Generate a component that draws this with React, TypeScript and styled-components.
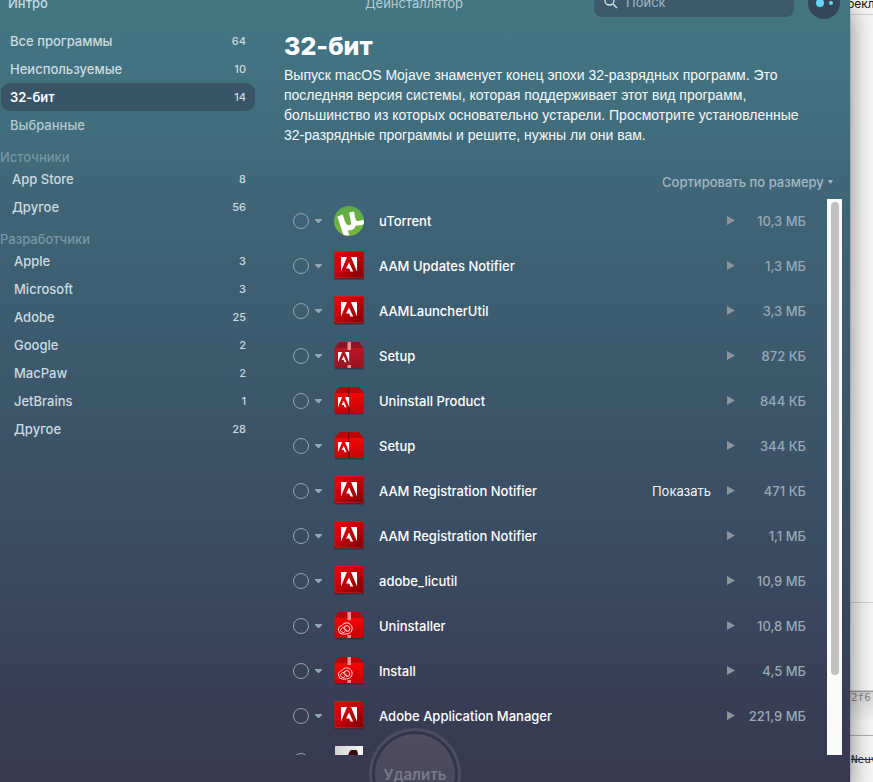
import React from "react";
import styled, { createGlobalStyle } from "styled-components";

const GlobalStyle = createGlobalStyle`
  *, *::before, *::after { box-sizing: border-box; }
  body {
    margin: 0;
    overflow: hidden;
    background: #f6f6f6;
    font-family: Inter, "Liberation Sans", sans-serif;
    font-size: 13px;
    color: #fff;
  }
  button, input, select { font: inherit; color: inherit; }
  ul { list-style: none; margin: 0; padding: 0; }
`;

const Desktop = styled.div`
  display: flex;
  height: 100vh;
  overflow: hidden;
`;

const Window = styled.div`
  position: relative;
  z-index: 1;
  flex: 1;
  min-width: 0;
  display: flex;
  flex-direction: column;
  overflow: hidden;
  background: linear-gradient(#437682 0%, #426f7e 14%, #3f6376 28%, #3c576b 50%, #39485f 76%, #383d55 90%, #37384f 100%);
`;

const WindowShadow = styled.div`
  z-index: 1;
  flex: 1;
  min-width: 0;
  display: flex;
  box-shadow: 0 0 1px rgba(0, 0, 0, 0.5), 0 10px 24px rgba(0, 0, 0, 0.5);
`;

const Header = styled.header`
  display: grid;
  grid-template-columns: 1fr auto 1fr;
  align-items: end;
  align-content: end;
  height: 19px;
  flex: none;
  padding: 0 10px 0 8px;
`;

const BackButton = styled.button`
  justify-self: start;
  height: 32px;
  padding: 0;
  border: 0;
  background: none;
  font-weight: 500;
  color: #c5d9df;
`;

const WindowTitle = styled.span`
  height: 32px;
  line-height: 32px;
  padding-right: 20px;
  color: #b3ccd3;
`;

const HeaderTools = styled.div`
  justify-self: end;
  display: flex;
  align-items: end;
  gap: 14px;
`;

const SearchBox = styled.label`
  display: flex;
  align-items: center;
  gap: 8px;
  width: 200px;
  height: 30px;
  margin-bottom: 2px;
  padding: 0 10px;
  border-radius: 8px;
  background: #3c5a6b;
  color: #dbe6ea;
`;

const SearchInput = styled.input`
  flex: 1;
  min-width: 0;
  padding: 0;
  border: 0;
  outline: 0;
  background: none;
  &::placeholder { color: #a5b7c1; opacity: 1; }
`;

const Assistant = styled.button`
  display: flex;
  align-items: center;
  justify-content: center;
  gap: 5px;
  width: 32px;
  height: 32px;
  padding: 0;
  border: 0;
  border-radius: 50%;
  background: #344659;
`;

const Dot = styled.span<{ $size: number }>`
  width: ${(p) => p.$size}px;
  height: ${(p) => p.$size}px;
  border-radius: 50%;
  background: #62d4f7;
`;

const Body = styled.div`
  flex: 1;
  min-height: 0;
  display: grid;
  grid-template-columns: 255px minmax(0, 1fr);
`;

const Sidebar = styled.nav`
  padding: 8px 0 0 1px;
`;

const GroupTitle = styled.h2`
  height: 26px;
  margin: 0 0 0 -1px;
  padding-top: 8px;
  font-size: 13px;
  line-height: 20px;
  font-weight: 500;
  color: #7897a5;
`;

const SideItem = styled.button<{ $indent: number; $active?: boolean; $dim?: boolean }>`
  display: flex;
  align-items: center;
  justify-content: space-between;
  width: 100%;
  height: 28px;
  padding: 0 9px 0 ${(p) => p.$indent}px;
  border: 0;
  border-radius: 9px;
  background: ${(p) => (p.$active ? "#395367" : "none")};
  color: ${(p) => (p.$active ? "#fff" : p.$dim ? "#b5c8d0" : "#cbdbe1")};
  font-weight: ${(p) => (p.$active ? 600 : 500)};
  text-align: left;
`;

const Count = styled.span`
  font-size: 11px;
  font-weight: 500;
  color: #cbdae1;
`;

const Main = styled.main`
  display: flex;
  flex-direction: column;
  min-height: 0;
  padding: 12px 8px 27px 29px;
`;

const Title = styled.h1`
  margin: 0 0 4px;
  font-size: 25px;
  line-height: 30px;
  font-weight: 800;
`;

const Description = styled.p`
  margin: 0;
  font-family: "Liberation Sans", Arial, sans-serif;
  font-size: 14px;
  line-height: 20px;
  white-space: nowrap;
  color: #f4f9fa;
`;

const SortField = styled.label`
  align-self: flex-end;
  display: flex;
  align-items: center;
  gap: 4px;
  height: 20px;
  margin: 27px 9px 7px 0;
  color: #a3b8c2;
`;

const SortSelect = styled.select`
  padding: 0;
  border: 0;
  outline: 0;
  appearance: none;
  background: none;
  font-weight: 500;
`;

const ListPane = styled.div`
  flex: 1;
  min-height: 0;
  display: flex;
`;

const AppList = styled.ul`
  flex: 1;
  min-width: 0;
  overflow: hidden;
`;

const AppRow = styled.li`
  display: flex;
  align-items: center;
  height: 45px;
  padding: 0 21px 2px 9px;
`;

const Tick = styled.input`
  appearance: none;
  width: 16px;
  height: 16px;
  margin: 0 6px 0 0;
  border: 1px solid #91a6b2;
  border-radius: 50%;
  &:checked { background: #62d4f7; }
`;

const IconButton = styled.button<{ $tone: string }>`
  display: flex;
  flex: none;
  padding: 0;
  border: 0;
  background: none;
  color: ${(p) => p.$tone};
`;

const AppIcon = styled.span`
  display: flex;
  flex: none;
  width: 30px;
  height: 32px;
  margin: 0 15px 0 12px;
`;

const AppName = styled.label`
  flex: 1;
  font-weight: 500;
  color: #fff;
`;

const ShowButton = styled.button`
  padding: 0;
  margin-right: 16px;
  border: 0;
  background: none;
  color: #eef3f5;
`;

const Size = styled.span`
  width: 71px;
  text-align: right;
  font-weight: 500;
  color: #98a9b6;
`;

const Track = styled.div`
  flex: none;
  width: 15px;
  padding: 3px;
  background: #fafafa;
`;

const Thumb = styled.div`
  width: 8px;
  height: 86%;
  margin: 0 auto;
  border-radius: 4px;
  background: #c1c1c1;
`;

const RemoveButton = styled.button`
  position: absolute;
  left: calc(50% - 56px);
  bottom: -38px;
  width: 92px;
  height: 92px;
  padding: 0;
  border: 3px solid #4a4c63;
  border-radius: 50%;
  background: linear-gradient(#504c62, #464559);
  box-shadow: inset 0 0 0 3px #323349;
  font-size: 15px;
  font-weight: 600;
  color: #77788c;
`;

const Backdrop = styled.aside`
  flex: none;
  width: 23px;
  display: flex;
  flex-direction: column;
  background: #f8f8f8;
  color: #111;
`;

const Strip = styled.div<{ $height: number }>`
  flex: none;
  display: flex;
  align-items: flex-end;
  height: ${(p) => p.$height}px;
  border-bottom: 1px solid #d2d2d2;
  font-size: 12px;
  line-height: 18px;
`;

const StripText = styled.span`
  margin: 0 0 1px -3px;
`;

const Mono = styled.span<{ $muted?: boolean }>`
  font-family: "DejaVu Sans Mono", "Liberation Mono", monospace;
  font-size: 11px;
  line-height: 12px;
  white-space: nowrap;
  color: ${(p) => (p.$muted ? "#858585" : "#263040")};
  text-decoration: ${(p) => (p.$muted ? "none" : "line-through")};
`;

const Cell = styled.div`
  display: flex;
  padding: 18px 0 0 1px;
`;

const HashCell = styled.div`
  display: flex;
  align-items: flex-start;
  height: 45px;
  flex: none;
  padding-left: 1px;
  border-top: 1px solid #999;
  border-bottom: 1px solid #b4b4b4;
  background: linear-gradient(#d8d8d8, #f8f8f8 30px);
`;

type IconKind = "utorrent" | "adobe" | "taped" | "box" | "cloud" | "preview";

function AdobeMark({ x, y, scale = 1 }: { x: number; y: number; scale?: number }) {
  return (
    <path
      transform={`translate(${x} ${y}) scale(${scale})`}
      fill="#fff"
      d="M0 0h6L0 14.500zM10 0h6v14.500zM8 5.400 12.200 14.500H9.400L8.200 11.500H5.100z"
    />
  );
}

function Package({ kind }: { kind: "taped" | "box" | "cloud" }) {
  const dull = kind === "taped";
  return (
    <>
      <path d="M5 2h20l4.500 6H.5z" fill={dull ? "#8c1421" : "#b80508"} />
      <path d="M1 7h28.500v22.500H1z" fill="rgba(40,20,35,.45)" />
      <path d="M.5 7.500h29V27q0 1-1 1h-27q-1 0-1-1z" fill={dull ? "url(#boxDull)" : "url(#boxRed)"} />
      {kind === "box" ? (
        <path d="M14 2h1l1 26h-2z" fill="#850006" />
      ) : (
        <path d="M13.500 2h3.500v8h-3.500zM13.500 25h3.500v3h-3.500z" fill="#e58d91" />
      )}
      {kind === "cloud" ? (
        <g fill="none" stroke="#ffe3e3" strokeWidth="1">
          <path d="M8.600 24.100A4.300 4.300 0 0 1 7.900 15.600A5.500 5.500 0 1 1 12.800 23.900Q10.500 24.100 8.600 24.100Z" />
          <path d="M11.200 21.200A2.400 2.400 0 1 1 10.500 18.200L13.500 21.500" />
          <path d="M9.800 18.200A3 3 0 1 1 12.800 21.600L10.300 18.800" />
        </g>
      ) : (
        <AdobeMark x={4} y={12} scale={0.7} />
      )}
    </>
  );
}

function Icon({ kind }: { kind: IconKind }) {
  return (
    <svg width="30" height="32" viewBox="0 0 30 32" aria-hidden="true">
      {kind === "utorrent" && (
        <>
          <circle cx="15" cy="16" r="15" fill="url(#torrent)" />
          <g clipPath="url(#torrentClip)" fill="none" stroke="#fff">
            <path d="M6 10.500 12.800 31" strokeWidth="5.600" />
            <path d="M9 18c1.500 5.500 9 6.500 10.800 1.200L17.600 7" strokeWidth="5" />
            <path d="M19 14c.8 4.400 4.600 5.600 11 2.800" strokeWidth="4.400" />
          </g>
        </>
      )}
      {kind === "adobe" && (
        <>
          <rect x="0" y="1.500" width="30" height="28" rx="1" fill="#4c2735" />
          <rect x=".5" y="1" width="29" height="27" rx="1" fill="url(#adobe)" />
          <rect x="1" y="1.500" width="28" height="26" rx="1" fill="none" stroke="#e13a31" strokeOpacity=".35" />
          <AdobeMark x={7} y={7} />
        </>
      )}
      {(kind === "taped" || kind === "box" || kind === "cloud") && <Package kind={kind} />}
      {kind === "preview" && (
        <>
          <rect x="1" y="1" width="28" height="29" fill="url(#paper)" />
          <path d="M14 12q1-7 4-7h4q2 0 2 7v8H14z" fill="#3a0711" />
        </>
      )}
    </svg>
  );
}

function IconPaints() {
  return (
    <svg width="0" height="0" display="block" aria-hidden="true">
      <defs>
        <clipPath id="torrentClip">
          <circle cx="15" cy="16" r="15" />
        </clipPath>
        <linearGradient id="torrent" x2="0" y2="1">
          <stop stopColor="#5cab45" />
          <stop offset="1" stopColor="#7cb53c" />
        </linearGradient>
        <linearGradient id="adobe" x2="1" y2="1">
          <stop stopColor="#e8060a" />
          <stop offset=".5" stopColor="#c00208" />
          <stop offset="1" stopColor="#790006" />
        </linearGradient>
        <linearGradient id="boxRed" x2="0" y2="1">
          <stop stopColor="#f80505" />
          <stop offset="1" stopColor="#c20306" />
        </linearGradient>
        <linearGradient id="boxDull" x2="0" y2="1">
          <stop stopColor="#bd1524" />
          <stop offset="1" stopColor="#971420" />
        </linearGradient>
        <linearGradient id="paper" x2="1" y2="0">
          <stop stopColor="#d4d3d6" />
          <stop offset="1" stopColor="#f7f7f7" />
        </linearGradient>
      </defs>
    </svg>
  );
}

interface SideEntry {
  label: string;
  count?: number;
  active?: boolean;
  dim?: boolean;
}

const groups: { title?: string; indent: number; items: SideEntry[] }[] = [
  {
    indent: 9,
    items: [
      { label: "Все программы", count: 64 },
      { label: "Неиспользуемые", count: 10 },
      { label: "32-бит", count: 14, active: true },
      { label: "Выбранные", dim: true },
    ],
  },
  {
    title: "Источники",
    indent: 11,
    items: [
      { label: "App Store", count: 8 },
      { label: "Другое", count: 56 },
    ],
  },
  {
    title: "Разработчики",
    indent: 13,
    items: [
      { label: "Apple", count: 3 },
      { label: "Microsoft", count: 3 },
      { label: "Adobe", count: 25 },
      { label: "Google", count: 2 },
      { label: "MacPaw", count: 2 },
      { label: "JetBrains", count: 1 },
      { label: "Другое", count: 28 },
    ],
  },
];

const apps: { name: string; size: string; icon: IconKind; show?: boolean }[] = [
  { name: "uTorrent", size: "10,3 МБ", icon: "utorrent" },
  { name: "AAM Updates Notifier", size: "1,3 МБ", icon: "adobe" },
  { name: "AAMLauncherUtil", size: "3,3 МБ", icon: "adobe" },
  { name: "Setup", size: "872 КБ", icon: "taped" },
  { name: "Uninstall Product", size: "844 КБ", icon: "box" },
  { name: "Setup", size: "344 КБ", icon: "box" },
  { name: "AAM Registration Notifier", size: "471 КБ", icon: "adobe", show: true },
  { name: "AAM Registration Notifier", size: "1,1 МБ", icon: "adobe" },
  { name: "adobe_licutil", size: "10,9 МБ", icon: "adobe" },
  { name: "Uninstaller", size: "10,8 МБ", icon: "cloud" },
  { name: "Install", size: "4,5 МБ", icon: "cloud" },
  { name: "Adobe Application Manager", size: "221,9 МБ", icon: "adobe" },
  { name: "", size: "", icon: "preview" },
];

export default function App() {
  return (
    <Desktop>
      <GlobalStyle />
      <WindowShadow>
        <Window>
          <Header>
            <BackButton type="button">Интро</BackButton>
            <WindowTitle>Деинсталлятор</WindowTitle>
            <HeaderTools>
              <SearchBox>
                <svg width="14" height="14" viewBox="0 0 14 14" fill="none" stroke="currentColor" strokeWidth="1.300" aria-hidden="true">
                  <circle cx="5.500" cy="5.500" r="4.500" />
                  <path d="m9 9 4 4" />
                </svg>
                <SearchInput type="text" placeholder="Поиск" aria-label="Поиск" />
              </SearchBox>
              <Assistant type="button" aria-label="Ассистент">
                <Dot $size={8} />
                <Dot $size={4} />
              </Assistant>
            </HeaderTools>
          </Header>
          <Body>
            <Sidebar>
              {groups.map((group, g) => (
                <React.Fragment key={g}>
                  {group.title && <GroupTitle>{group.title}</GroupTitle>}
                  {group.items.map((item) => (
                    <SideItem key={item.label} type="button" $indent={group.indent} $active={item.active} $dim={item.dim}>
                      {item.label}
                      {item.count !== undefined && <Count>{item.count}</Count>}
                    </SideItem>
                  ))}
                </React.Fragment>
              ))}
            </Sidebar>
            <Main>
              <Title>32-бит</Title>
              <Description>
                Выпуск macOS Mojave знаменует конец эпохи 32-разрядных программ. Это
                <br />
                последняя версия системы, которая поддерживает этот вид программ,
                <br />
                большинство из которых основательно устарели. Просмотрите установленные
                <br />
                32-разрядные программы и решите, нужны ли они вам.
              </Description>
              <SortField>
                <SortSelect aria-label="Сортировка">
                  <option>Сортировать по размеру</option>
                </SortSelect>
                <svg width="5" height="4" viewBox="0 0 5 4" aria-hidden="true">
                  <path d="M0 0h5L2.500 4z" fill="currentColor" />
                </svg>
              </SortField>
              <ListPane>
                <AppList>
                  {apps.map((app, i) => (
                    <AppRow key={i}>
                      <Tick type="checkbox" id={`app-${i}`} />
                      <IconButton type="button" $tone="#91a7b4" aria-label="Подробнее">
                        <svg width="7" height="4" viewBox="0 0 7 4" aria-hidden="true">
                          <path d="M0 0h7v1L4 4H3L0 1z" fill="currentColor" />
                        </svg>
                      </IconButton>
                      <AppIcon>
                        <Icon kind={app.icon} />
                      </AppIcon>
                      <AppName htmlFor={`app-${i}`}>{app.name}</AppName>
                      {app.show && <ShowButton type="button">Показать</ShowButton>}
                      <IconButton type="button" $tone="#8c959d" aria-label="Открыть">
                        <svg width="8" height="9" viewBox="0 0 8 9" aria-hidden="true">
                          <path d="M0 0v9l8-4.500z" fill="currentColor" />
                        </svg>
                      </IconButton>
                      <Size>{app.size}</Size>
                    </AppRow>
                  ))}
                </AppList>
                <Track>
                  <Thumb />
                </Track>
              </ListPane>
            </Main>
          </Body>
          <RemoveButton type="button">Удалить</RemoveButton>
          <IconPaints />
        </Window>
      </WindowShadow>
      <Backdrop>
        <Strip $height={15}>
          <StripText>рекл</StripText>
        </Strip>
        <Strip $height={588} />
        <Strip $height={88} />
        <HashCell>
          <Mono $muted>2f6</Mono>
        </HashCell>
        <Cell>
          <Mono>Neuv</Mono>
        </Cell>
      </Backdrop>
    </Desktop>
  );
}
